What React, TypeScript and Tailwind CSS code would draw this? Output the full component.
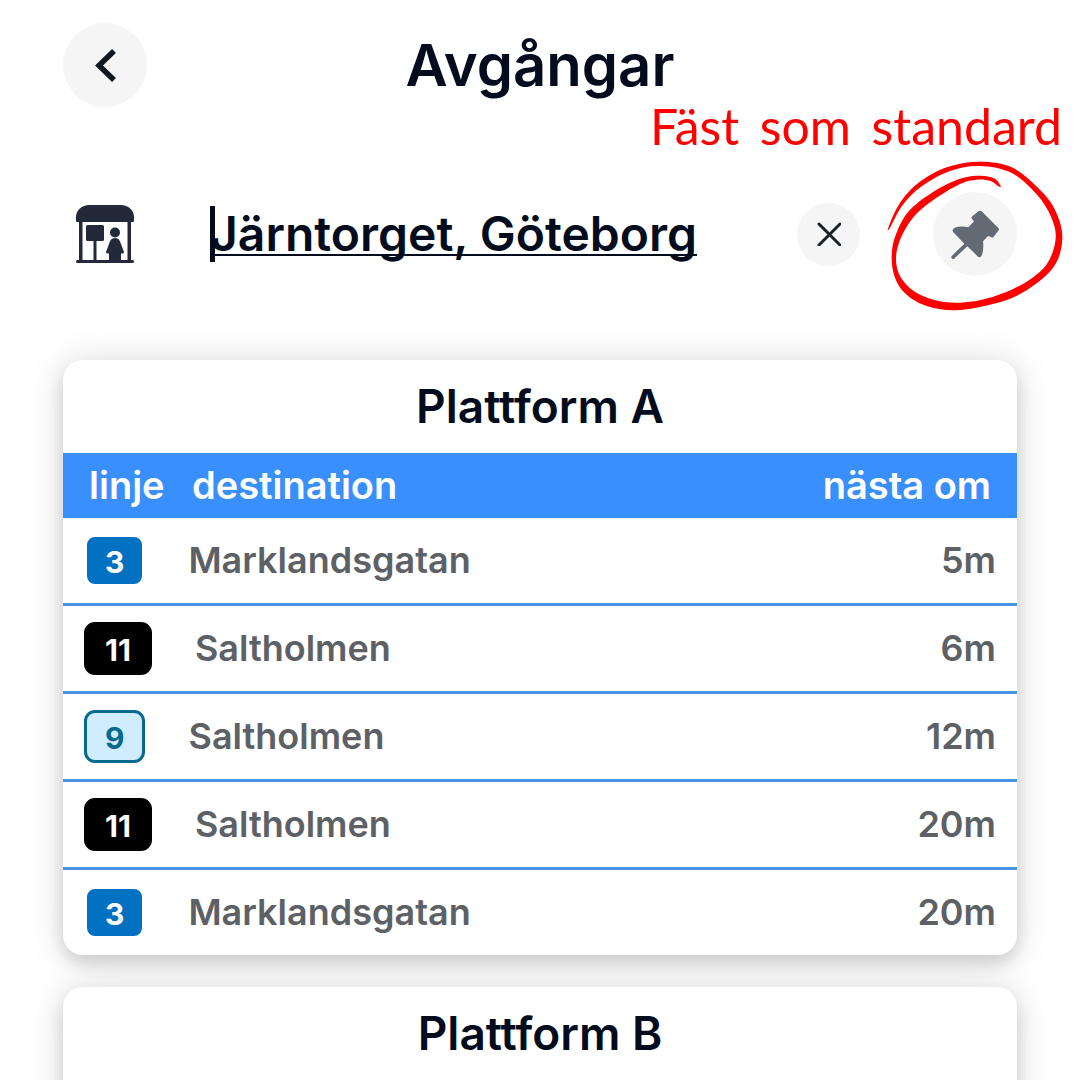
import { useState } from 'react';

type Departure = { line: string; destination: string; next: string };

const platformA: Departure[] = [
  { line: '3', destination: 'Marklandsgatan', next: '5m' },
  { line: '11', destination: 'Saltholmen', next: '6m' },
  { line: '9', destination: 'Saltholmen', next: '12m' },
  { line: '11', destination: 'Saltholmen', next: '20m' },
  { line: '3', destination: 'Marklandsgatan', next: '20m' },
];

const badgeColors: Record<string, string> = {
  '3': 'border-white bg-[#0271c2] text-white',
  '9': 'border-[#06698f] bg-[#d0edff] text-[#06698f]',
  '11': 'border-black bg-black text-white',
};

/* Outline of the hand-drawn loop: the outer edge first, then back along the inner edge. */
const loop: [number, number][] = [
  [325, 443], [355, 377], [410, 313], [500, 262], [600, 245], [700, 264], [790, 340], [832, 405],
  [847, 475], [828, 550], [770, 610], [680, 660], [540, 690], [440, 678], [375, 640], [344, 590],
  [335, 530], [346, 468], [385, 395], [460, 335], [540, 296], [600, 287], [642, 295], [662, 318],
  [655, 319], [632, 303], [590, 299], [540, 312], [460, 360], [400, 412], [360, 480], [348, 540],
  [362, 592], [402, 634], [460, 659], [540, 668], [640, 650], [740, 605], [802, 550], [827, 475],
  [813, 410], [770, 343], [695, 279], [600, 258], [510, 273], [425, 319], [368, 375], [330, 443],
];

function smoothPath(pts: [number, number][]) {
  const n = pts.length;
  let d = `M${pts[0][0]} ${pts[0][1]}`;
  for (let i = 0; i < n; i++) {
    const a = pts[(i + n - 1) % n];
    const b = pts[i];
    const c = pts[(i + 1) % n];
    const e = pts[(i + 2) % n];
    d += `C${b[0] + (c[0] - a[0]) / 6} ${b[1] + (c[1] - a[1]) / 6} ${c[0] - (e[0] - b[0]) / 6} ${c[1] - (e[1] - b[1]) / 6} ${c[0]} ${c[1]}`;
  }
  return d + 'Z';
}

function StopIcon() {
  return (
    <svg viewBox="0 0 58 58" className="size-[58px] shrink-0" fill="#232938" aria-hidden="true">
      <path d="M0 16V12C0 5 6 0 13 0H45C52 0 58 5 58 12V16Q58 17 56.500 17H1.500Q0 17 0 16Z" />
      <path d="M3 16H6.500V56H3ZM51.500 16H55V56H51.500Z" />
      <rect x="0" y="55" width="58" height="3" rx="1.500" />
      <rect x="10" y="20" width="18" height="16" rx="1.500" />
      <rect x="17.500" y="35" width="3" height="21" />
      <circle cx="39" cy="27.500" r="5" />
      <path d="M39 33C35 33 34 36 33 39L30 47Q30 48.500 33 48.500V56H45V48.500Q48 48.500 48 47L45 39C44 36 43 33 39 33Z" />
    </svg>
  );
}

function PinIcon() {
  return (
    <svg viewBox="510 385 150 150" className="size-[50px]" fill="#646a73" aria-hidden="true">
      <path d="M595 392Q600 388 605 392L655 442Q659 446 655 450L641 468Q637 473 633 469L624 466L609 482Q612 505 606 523Q601 534 594 528L562 497L522 534Q518 537 515 533Q512 529 516 525L553 489L520 455Q514 447 524 441Q543 435 565 440L582 422L576 415Q572 411 577 407Z" />
    </svg>
  );
}

function Platform({ name, departures }: { name: string; departures: Departure[] }) {
  return (
    <section className="overflow-hidden rounded-[20px] bg-white shadow-[0_9px_16px_rgba(0,0,0,0.12),0_2px_36px_rgba(0,0,0,0.15)]">
      <h2 className="py-4 text-center text-[46px] leading-[61px] font-semibold text-[#020c1c]">{name}</h2>
      {departures.length > 0 ? (
        <table className="block w-full">
          <thead className="block bg-[#3a8fff] text-[38px] leading-[65px] text-white">
            <tr className="flex px-[26px]">
              <th className="w-[103px] text-left font-semibold">linje</th>
              <th className="flex-1 text-left font-semibold">destination</th>
              <th className="text-right font-semibold">nästa om</th>
            </tr>
          </thead>
          <tbody className="block divide-y-3 divide-[#4a92e6] text-[36px] leading-[85px] text-[#5d6166]">
            {departures.map((d, i) => (
              <tr key={i} className="flex items-center px-[21px] font-semibold">
                <td className="flex h-[85px] items-center pr-[43px]">
                  <span className={`block rounded-[11px] border-3 px-[18px] pt-[3px] text-[30px] leading-[44px] font-bold ${badgeColors[d.line]}`}>
                    {d.line}
                  </span>
                </td>
                <td className="flex-1">{d.destination}</td>
                <td className="text-right">{d.next}</td>
              </tr>
            ))}
          </tbody>
        </table>
      ) : (
        <div className="h-16" />
      )}
    </section>
  );
}

export default function App() {
  const [stop, setStop] = useState('Järntorget, Göteborg');
  return (
    <main className="h-screen overflow-hidden bg-white px-[63px] pt-[23px] font-['Inter',sans-serif]">
      <header className="flex items-center">
        <button aria-label="Tillbaka" className="flex size-[84px] items-center justify-center rounded-full bg-[#f5f5f6]">
          <svg viewBox="0 0 84 84" className="size-[84px]" fill="none" stroke="#111820" strokeWidth="5.500" aria-hidden="true">
            <path d="M51 28L36 42.500L51 57" />
          </svg>
        </button>
        <h1 className="flex-1 pr-[84px] text-center text-[58px] leading-[84px] font-semibold text-[#020c1c]">Avgångar</h1>
      </header>

      <div className="mt-[85px] flex items-center pl-[13px]">
        <StopIcon />
        <div className="relative ml-[76px] flex-1">
          <input
            aria-label="Hållplats"
            value={stop}
            onChange={(e) => setStop(e.target.value)}
            className="block w-full text-[48px] leading-[60px] font-semibold text-[#020c1c] underline decoration-2 underline-offset-3 outline-none [text-decoration-skip-ink:none]"
          />
          <span className="absolute top-[2px] left-0 h-[56px] w-[5px] bg-[#020c1c]" />
        </div>
        <button aria-label="Rensa" className="flex size-[63px] items-center justify-center rounded-full bg-[#f5f5f6]">
          <svg viewBox="0 0 24 24" className="size-6" fill="none" stroke="#1b2026" strokeWidth="3" strokeLinecap="round" aria-hidden="true">
            <path d="M2 2L23 23M23 2L2 23" />
          </svg>
        </button>
        <div className="relative ml-[73px]">
          <button aria-label="Fäst som standard" className="flex size-[84px] items-center justify-center rounded-full bg-[#f5f5f6]">
            <PinIcon />
          </button>
          <svg viewBox="315 240 540 456" className="pointer-events-none absolute -top-[32px] -left-[48px] h-[152px] w-[180px] max-w-none" fill="#ff0000" aria-hidden="true">
            <path d={smoothPath(loop)} />
          </svg>
          <p className="pointer-events-none absolute -top-[90px] -right-[45px] flex w-[412px] justify-between font-['Lato',sans-serif] text-[50px] leading-[48px] text-[#ff0000]">
            <span>Fäst</span> <span>som</span> <span>standard</span>
          </p>
        </div>
      </div>

      <div className="mt-[84px] flex flex-col gap-8">
        <Platform name="Plattform A" departures={platformA} />
        <Platform name="Plattform B" departures={[]} />
      </div>
    </main>
  );
}
